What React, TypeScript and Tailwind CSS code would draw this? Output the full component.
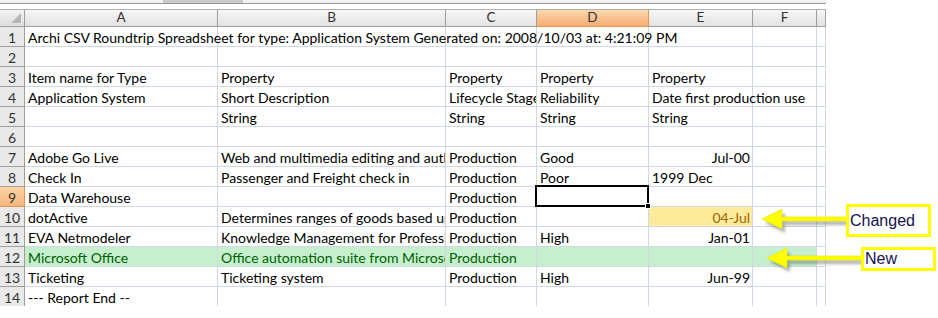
import React from "react";

const W = [193, 228, 91, 112, 104, 64, 9];
const LETTERS = ["A", "B", "C", "D", "E", "F", ""];

type Cell = { t?: string; right?: boolean; clip?: boolean; bg?: string; color?: string; sel?: boolean };

const G = "bg-[#c6efce]";
const GT = "text-[#006100]";

const rows: Cell[][] = [
  [{ t: "Archi CSV Roundtrip Spreadsheet for type: Application System Generated on: 2008/10/03 at: 4:21:09 PM" }, {}, {}, {}, {}, {}, {}],
  [{}, {}, {}, {}, {}, {}, {}],
  [{ t: "Item name for Type" }, { t: "Property" }, { t: "Property" }, { t: "Property" }, { t: "Property" }, {}, {}],
  [{ t: "Application System" }, { t: "Short Description" }, { t: "Lifecycle Stage", clip: true }, { t: "Reliability" }, { t: "Date first production use" }, {}, {}],
  [{}, { t: "String" }, { t: "String" }, { t: "String" }, { t: "String" }, {}, {}],
  [{}, {}, {}, {}, {}, {}, {}],
  [{ t: "Adobe Go Live" }, { t: "Web and multimedia editing and authoring", clip: true }, { t: "Production" }, { t: "Good" }, { t: "Jul-00", right: true }, {}, {}],
  [{ t: "Check In" }, { t: "Passenger and Freight check in" }, { t: "Production" }, { t: "Poor" }, { t: "1999 Dec" }, {}, {}],
  [{ t: "Data Warehouse" }, {}, { t: "Production" }, { sel: true }, {}, {}, {}],
  [{ t: "dotActive" }, { t: "Determines ranges of goods based upon", clip: true }, { t: "Production" }, {}, { t: "04-Jul", right: true, bg: "bg-[#ffeb9c]", color: "text-[#9c6500]" }, {}, {}],
  [{ t: "EVA Netmodeler" }, { t: "Knowledge Management for Professionals", clip: true }, { t: "Production" }, { t: "High" }, { t: "Jan-01", right: true }, {}, {}],
  [
    { t: "Microsoft Office", bg: G, color: GT },
    { t: "Office automation suite from Microsoft", clip: true, bg: G, color: GT },
    { t: "Production", bg: G, color: GT },
    { bg: G },
    { bg: G },
    { bg: G },
    {},
  ],
  [{ t: "Ticketing" }, { t: "Ticketing system" }, { t: "Production" }, { t: "High" }, { t: "Jun-99", right: true }, {}, {}],
  [{ t: "--- Report End --" }, {}, {}, {}, {}, {}, {}],
];

function Arrow({ tipX, y, endX }: { tipX: number; y: number; endX: number }) {
  const hb = tipX + 20;
  const pts = `${tipX},${y} ${hb},${y - 10} ${hb},${y - 2} ${endX},${y - 2} ${endX},${y + 2} ${hb},${y + 2} ${hb},${y + 10}`;
  return (
    <g>
      <polygon points={pts} fill="#555" opacity="0.45" transform="translate(3,4)" filter="url(#blur)" />
      <polygon points={pts} fill="#ffff00" stroke="#e5e500" strokeWidth="0.6" />
    </g>
  );
}

export default function App() {
  return (
    <div className="relative w-[938px] h-[318px] bg-white overflow-hidden" style={{ fontFamily: "Lato, 'Open Sans', sans-serif" }}>
      <div className="w-[826px] h-[306px] overflow-hidden">
        {/* top strip */}
        <div className="w-[826px] h-[9px] flex flex-col bg-white">
          <div className="h-[3px] bg-[#f2f2f2] flex">
            <div className="ml-[163px] w-[80px] h-[3px] bg-[#c9c9c9]" />
          </div>
          <div className="h-[1px] bg-[#9a9a9a]" />
        </div>
        {/* column header */}
        <div className="flex h-[18px] w-[826px] bg-gradient-to-b from-[#f7f7f7] to-[#e1e1e1] border-t border-[#b0b0b0]">
          <div className="w-[25px] flex items-end justify-end p-[3px] border-r border-b border-[#9e9e9e] bg-gradient-to-b from-[#f2f2f2] to-[#dedede]">
            <div className="w-0 h-0 border-l-[10px] border-l-transparent border-b-[10px] border-b-[#b5b5b5]" />
          </div>
          {W.map((w, i) => (
            <div
              key={i}
              style={{ width: w }}
              className={
                "flex items-center justify-center text-[13.5px] leading-none border-r border-b " +
                (i === 3
                  ? "bg-gradient-to-b from-[#fbd8ae] to-[#f8ad72] border-[#e8934e] text-[#333]"
                  : "border-[#9e9e9e] text-[#333]")
              }
            >
              {LETTERS[i]}
            </div>
          ))}
        </div>
        {/* rows */}
        {rows.map((r, ri) => (
          <div key={ri} className="flex h-[20px] w-[826px]">
            <div
              className={
                "w-[25px] flex items-center justify-center pt-[2px] text-[14px] leading-none border-r border-b " +
                (ri === 8
                  ? "bg-gradient-to-b from-[#fbd3a4] to-[#f8b67e] border-[#e8934e] text-[#333]"
                  : "bg-[#e9e9e9] border-[#9e9e9e] text-[#333]")
              }
            >
              {ri + 1}
            </div>
            {r.map((c, ci) => (
              <div
                key={ci}
                style={{ width: W[ci] }}
                className={
                  "relative flex items-center pt-[2px] border-r border-b border-[#d0d7e5] text-[14px] leading-none whitespace-nowrap " +
                  (c.bg ? c.bg + " " : "") +
                  (c.color ? c.color + " " : "text-black ") +
                  (c.right ? "justify-end pr-[2px] " : "pl-[3px] ") +
                  (c.clip ? "overflow-hidden " : "")
                }
              >
                {c.t ? <span className={ri === 0 || c.t.startsWith("Date") ? "relative z-10" : ""}>{c.t}</span> : null}
                {c.sel ? (
                  <div className="absolute -left-[2px] -top-[2px] w-[114px] h-[22px] border-2 border-black z-20">
                    <div className="absolute -right-[4px] -bottom-[4px] w-[6px] h-[6px] bg-black border border-white" />
                  </div>
                ) : null}
              </div>
            ))}
          </div>
        ))}
      </div>
      {/* overlays: arrows and callouts */}
      <svg className="absolute left-0 top-0" width="938" height="318">
        <defs>
          <filter id="blur" x="-20%" y="-50%" width="140%" height="200%">
            <feGaussianBlur stdDeviation="1.5" />
          </filter>
        </defs>
        <Arrow tipX={762} y={219} endX={848} />
        <Arrow tipX={767} y={258} endX={863} />
      </svg>
      <div
        className="absolute left-[846px] top-[204px] w-[85px] h-[33px] bg-white border-[3px] border-[#ffff00] flex items-center pl-[1px] text-[16px] text-[#141450]"
        style={{ fontFamily: "'Liberation Sans', Arial, sans-serif" }}
      >
        Changed
      </div>
      <div
        className="absolute left-[861px] top-[247px] w-[75px] h-[24px] bg-white border-[3px] border-[#ffff00] flex items-center pl-[1px] text-[16px] text-[#141450]"
        style={{ fontFamily: "'Liberation Sans', Arial, sans-serif" }}
      >
        New
      </div>
    </div>
  );
}
